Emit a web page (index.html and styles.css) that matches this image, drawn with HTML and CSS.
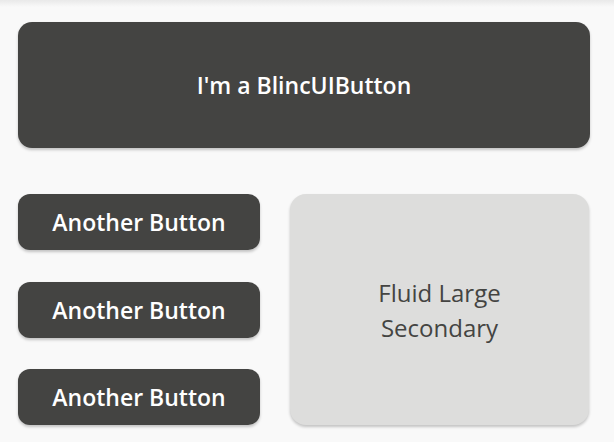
FILE: index.html
```html
<!DOCTYPE html>
<html lang="en">
<head>
    <meta charset="UTF-8">
    <meta name="viewport" content="width=device-width, initial-scale=1.0">
    <title>BlincUI Buttons</title>
    <link rel="stylesheet" href="styles.css">
</head>
<body>
    <div class="page">
        <button class="btn btn-primary btn-hero">I'm a BlincUIButton</button>

        <div class="button-grid">
            <button class="btn btn-primary btn-small">Another Button</button>
            <button class="btn btn-primary btn-small">Another Button</button>
            <button class="btn btn-primary btn-small">Another Button</button>
            <button class="btn btn-secondary btn-fluid">Fluid Large<br>Secondary</button>
        </div>
    </div>
</body>
</html>
```

FILE: styles.css
```css
html, body {
    margin: 0;
    height: 100%;
}

body {
    background: linear-gradient(#e9e9e9, #f9f9f9 7px);
    background-color: #f9f9f9;
    font-family: "Open Sans", "Noto Sans", sans-serif;
}

.page {
    display: flex;
    flex-direction: column;
    gap: 46px;
    padding: 22px 24px 0 18px;
}

.btn {
    font-family: inherit;
    border: none;
    border-radius: 14px;
    cursor: pointer;
    padding: 0;
    box-shadow: 0 2px 3px rgba(0, 0, 0, 0.22);
}

.btn-primary {
    background-color: #444442;
    color: #ffffff;
    font-weight: 600;
}

.btn-secondary {
    background-color: #dddddc;
    color: #444442;
    font-weight: 400;
}

.btn-hero {
    width: 572px;
    height: 126px;
    font-size: 23px;
}

.button-grid {
    display: grid;
    grid-template-columns: 242px 299px;
    grid-template-rows: repeat(3, 56px);
    column-gap: 30px;
    row-gap: 31.5px;
}

.btn-small {
    grid-column: 1;
    font-size: 23px;
    border-radius: 12px;
}

.btn-fluid {
    grid-column: 2;
    grid-row: 1 / span 3;
    font-size: 24px;
    line-height: 35px;
    border-radius: 16px;
}
```
